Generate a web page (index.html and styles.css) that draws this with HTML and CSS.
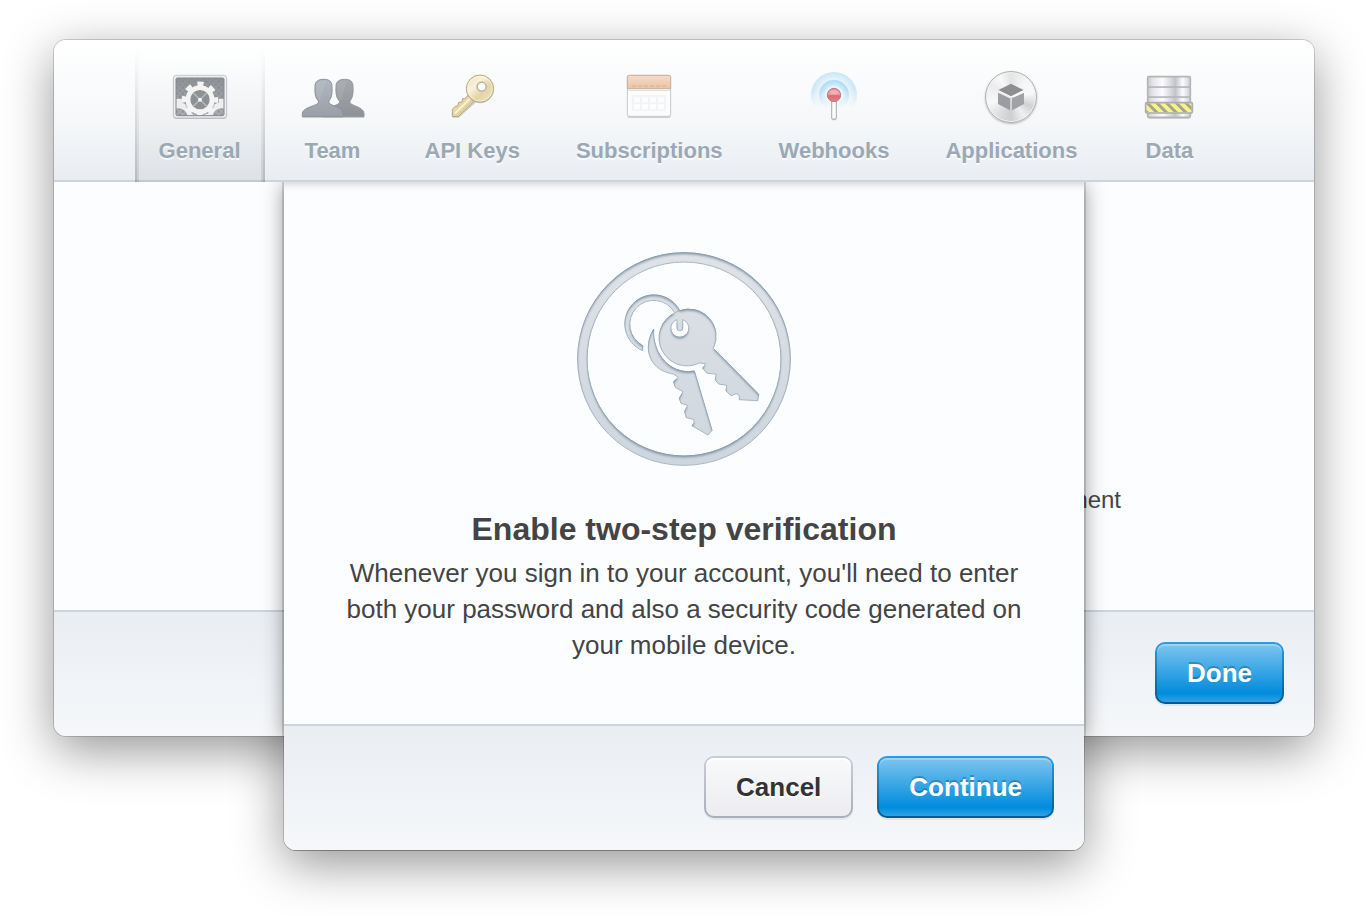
FILE: index.html
```html
<!DOCTYPE html>
<html lang="en">

<head>
    <meta charset="UTF-8">
    <meta name="viewport" content="width=device-width, initial-scale=1.0">
    <title>Account settings</title>
    <link rel="stylesheet" href="styles.css">
</head>

<body>
    <div class="window">
        <nav class="tabs">
            <a href="#general" class="tab active">
                <svg class="tab-icon" viewBox="114 93 192 192" aria-hidden="true">
                    <defs>
                        <clipPath id="panelClip"><rect x="138" y="129" width="144" height="113" rx="4"/></clipPath>
                        <linearGradient id="panelBg" x1="0" y1="0" x2="0" y2="1">
                            <stop offset="0" stop-color="#8f9296"/>
                            <stop offset="1" stop-color="#abadb0"/>
                        </linearGradient>
                        <pattern id="holes" width="18" height="18" patternUnits="userSpaceOnUse">
                            <circle cx="5" cy="5" r="4" fill="#85888c"/>
                            <circle cx="14" cy="14" r="4" fill="#85888c"/>
                        </pattern>
                        <g id="gear">
                            <circle r="46" fill="none" stroke-width="17" stroke-dasharray="18 18.13" stroke-dashoffset="9"/>
                            <circle r="35" fill="none" stroke-width="17"/>
                        </g>
                    </defs>
                    <rect x="130" y="124" width="160" height="128" rx="9" fill="#c3c5c8"/>
                    <rect x="130" y="121" width="160" height="128" rx="9" fill="#eceef4" stroke="#adb0b7" stroke-width="2"/>
                    <rect x="138" y="129" width="144" height="113" rx="4" fill="url(#panelBg)"/>
                    <g clip-path="url(#panelClip)">
                        <rect x="138" y="129" width="144" height="113" fill="url(#holes)" opacity=".6"/>
                        <g stroke="#eeeeef">
                            <use href="#gear" x="146" y="246"/>
                            <use href="#gear" x="274" y="246"/>
                        </g>
                        <circle cx="210" cy="196" r="46" fill="#8e9194" opacity=".5"/>
                        <use href="#gear" x="210" y="194" stroke="#f4f4f5"/>
                        <circle cx="210" cy="194" r="29" fill="#8e9194"/>
                        <path d="M190 174l40 40M230 174l-40 40" stroke="#b9bbbe" stroke-width="4"/>
                        <circle cx="210" cy="194" r="6" fill="#f6f6f7"/>
                    </g>
                    <rect x="138" y="129" width="144" height="113" rx="4" fill="none" stroke="#85888c" stroke-width="3"/>
                </svg>
                <span class="tab-label">General</span>
            </a>
            <a href="#team" class="tab">
                <svg class="tab-icon" viewBox="510 93 192 192" aria-hidden="true">
                    <defs>
                        <linearGradient id="personBack" x1="0" y1="0" x2="0" y2="1">
                            <stop offset="0" stop-color="#a5a8ad"/>
                            <stop offset="1" stop-color="#8e9195"/>
                        </linearGradient>
                        <linearGradient id="personFront" x1="0" y1="0" x2="0" y2="1">
                            <stop offset="0" stop-color="#b0b7c0"/>
                            <stop offset="1" stop-color="#9a9fa7"/>
                        </linearGradient>
                        <path id="person" d="M578 133C595 133 603 140 603 154C604 176 602 188 594 197Q592 203 597 207C611 214 631 219 635 231Q637 238 636 245H514Q513 238 515 231C521 219 545 214 559 207Q564 203 562 197C553 188 551 176 552 154C552 140 561 133 578 133Z"/>
                    </defs>
                    <g fill="#a9abad" opacity=".6">
                        <use href="#person" x="0" y="3"/>
                        <use href="#person" x="63" y="3"/>
                    </g>
                    <use href="#person" x="63" fill="url(#personBack)" stroke="#94979c" stroke-width="3"/>
                    <use href="#person" fill="url(#personFront)" stroke="#8b929c" stroke-width="3"/>
                    <path d="M586 137L566 198Q555 184 555 156Q556 136 586 137ZM649 137L629 198Q618 184 618 156Q619 136 649 137Z" fill="#fff" opacity=".08"/>
                </svg>
                <span class="tab-label">Team</span>
            </a>
            <a href="#keys" class="tab">
                <svg class="tab-icon" viewBox="117 48 192 192" aria-hidden="true">
                    <defs>
                        <linearGradient id="gold" x1="0" y1="0" x2="1" y2="1">
                            <stop offset="0" stop-color="#e8deb8"/>
                            <stop offset=".35" stop-color="#f8f2da"/>
                            <stop offset=".6" stop-color="#e2d5a8"/>
                            <stop offset="1" stop-color="#efe6c3"/>
                        </linearGradient>
                    </defs>
                    <path d="M203 138L190 148L185 147L183 157L173 158L170 169L163 171L154 181V203H173L224 158Z" fill="#b5b3ac" opacity=".6"/>
                    <path d="M203 134L191 146L185 146L183 156L173 157L170 168L163 169L154 178V199L172 200L218 155Z" fill="#e6d8a6" stroke="#b5a684" stroke-width="3" stroke-linejoin="round"/>
                    <path d="M207 146L162 190" stroke="#fbf5d8" stroke-width="5"/>
                    <path d="M213 152L168 197" stroke="#c9b98a" stroke-width="2"/>
                    <circle cx="237" cy="119" r="41" fill="#b5b3ac" opacity=".5"/>
                    <circle cx="237" cy="116" r="41" fill="url(#gold)" stroke="#b5a684" stroke-width="3"/>
                    <circle cx="237" cy="116" r="37" fill="none" stroke="#fdf9e8" stroke-width="2" opacity=".8"/>
                    <circle cx="242" cy="110" r="17" fill="#d9cdaa"/>
                    <circle cx="242" cy="110" r="13" fill="#f8f9fb" stroke="#b3a98f" stroke-width="3"/>
                </svg>
                <span class="tab-label">API Keys</span>
            </a>
            <a href="#subscriptions" class="tab">
                <svg class="tab-icon" viewBox="651 48 192 192" aria-hidden="true">
                    <defs>
                        <linearGradient id="calTop" x1="0" y1="0" x2="0" y2="1">
                            <stop offset="0" stop-color="#f5ddc9"/>
                            <stop offset="1" stop-color="#eac3a3"/>
                        </linearGradient>
                    </defs>
                    <rect x="682" y="80" width="130" height="124" rx="6" fill="#cfcfd1"/>
                    <rect x="682" y="76" width="130" height="123" rx="6" fill="#fcfcfd" stroke="#c9cacc" stroke-width="3"/>
                    <path d="M682 116V82Q682 76 688 76H806Q812 76 812 82V116Z" fill="url(#calTop)" stroke="#cbb09b" stroke-width="3"/>
                    <path d="M696 108H800" stroke="#d6b093" stroke-width="3" stroke-dasharray="12 6"/>
                    <path d="M684 121H810" stroke="#dadadc" stroke-width="3"/>
                    <rect x="696" y="135" width="102" height="48" fill="#f3f4f5"/>
                    <path d="M702 149H794M702 170H794" stroke="#fdfdfe" stroke-width="15" stroke-dasharray="18 6"/>
                </svg>
                <span class="tab-label">Subscriptions</span>
            </a>
            <a href="#webhooks" class="tab">
                <svg class="tab-icon" viewBox="129 48 192 192" aria-hidden="true">
                    <defs>
                        <linearGradient id="waveFade" x1="0" y1="0" x2="0" y2="1">
                            <stop offset=".4" stop-color="#fff"/>
                            <stop offset=".74" stop-color="#000"/>
                        </linearGradient>
                        <mask id="waveMask"><rect x="150" y="60" width="150" height="150" fill="url(#waveFade)"/></mask>
                        <radialGradient id="waveOuter">
                            <stop offset=".65" stop-color="#e8f5fc"/>
                            <stop offset="1" stop-color="#c8e6f6"/>
                        </radialGradient>
                        <radialGradient id="waveInner">
                            <stop offset=".5" stop-color="#dff1fc"/>
                            <stop offset="1" stop-color="#addaf5"/>
                        </radialGradient>
                        <linearGradient id="ball" x1="0" y1="0" x2="0" y2="1">
                            <stop offset="0" stop-color="#e28c90"/>
                            <stop offset=".45" stop-color="#eca0a3"/>
                            <stop offset=".55" stop-color="#d96d73"/>
                            <stop offset="1" stop-color="#e08588"/>
                        </linearGradient>
                    </defs>
                    <g mask="url(#waveMask)">
                        <circle cx="225" cy="135" r="69" fill="url(#waveOuter)"/>
                        <circle cx="225" cy="135" r="45" fill="url(#waveInner)"/>
                        <circle cx="225" cy="135" r="28" fill="#e6f4fd"/>
                    </g>
                    <rect x="218" y="150" width="14" height="61" rx="3" fill="#cbcbcb"/>
                    <rect x="218" y="150" width="14" height="57" rx="2" fill="#f4f4f4" stroke="#b0b0b0" stroke-width="3"/>
                    <path d="M225 156V204" stroke="#fff" stroke-width="5"/>
                    <circle cx="225" cy="135" r="20" fill="url(#ball)" stroke="#c9777b" stroke-width="3"/>
                    <ellipse cx="225" cy="126" rx="12" ry="6" fill="#fff" opacity=".25"/>
                </svg>
                <span class="tab-label">Webhooks</span>
            </a>
            <a href="#applications" class="tab">
                <span class="tab-icon app-disc">
                    <svg class="app-cube" viewBox="717 99 84 84" aria-hidden="true">
                        <path d="M759 104L797 122L759 141L721 122Z" fill="#fff"/>
                        <path d="M759 101L797 120L759 139L721 120Z" fill="#8d8f91"/>
                        <path d="M720 128L756 145V181L720 162Z" fill="#9b9da0"/>
                        <path d="M798 128L762 145V181L798 162Z" fill="#a0a2a5"/>
                    </svg>
                </span>
                <span class="tab-label">Applications</span>
            </a>
            <a href="#data" class="tab">
                <svg class="tab-icon" viewBox="120 108 192 192" aria-hidden="true">
                    <defs>
                        <linearGradient id="steel">
                            <stop offset="0" stop-color="#c9c9d1"/>
                            <stop offset=".12" stop-color="#e4e4ea"/>
                            <stop offset=".35" stop-color="#fcfcff"/>
                            <stop offset=".65" stop-color="#c3c3cc"/>
                            <stop offset=".82" stop-color="#fafaff"/>
                            <stop offset="1" stop-color="#cdcdd4"/>
                        </linearGradient>
                        <clipPath id="tapeClip"><rect x="148" y="220" width="136" height="27"/></clipPath>
                    </defs>
                    <rect x="152" y="248" width="128" height="19" rx="6" fill="#d4d4d6"/>
                    <g fill="url(#steel)" stroke="#b5b5b8" stroke-width="5">
                        <rect x="152" y="200" width="128" height="62" rx="5"/>
                        <rect x="152" y="170" width="128" height="31" rx="3"/>
                        <rect x="152" y="140" width="128" height="31" rx="3"/>
                    </g>
                    <rect x="146" y="218" width="140" height="31" rx="3" fill="#f6f38d"/>
                    <path clip-path="url(#tapeClip)" d="M146 214L186 254M175 214L215 254M204 214L244 254M233 214L273 254M262 214L302 254M117 214L157 254" stroke="#a8a68a" stroke-width="9"/>
                    <rect x="146" y="218" width="140" height="31" rx="3" fill="none" stroke="#acacae" stroke-width="5"/>
                </svg>
                <span class="tab-label">Data</span>
            </a>
        </nav>

        <div class="window-main">
            <div class="window-body">
                <span class="setting-text">ment</span>
            </div>
            <div class="actions">
                <button type="button" class="btn btn-blue">Done</button>
            </div>
        </div>

        <section class="sheet" role="dialog" aria-labelledby="sheetTitle">
            <div class="sheet-body">
                <svg class="keys" viewBox="48 36 642 642" aria-hidden="true">
                    <defs>
                        <linearGradient id="keysFill" gradientUnits="userSpaceOnUse" x1="0" y1="36" x2="0" y2="678">
                            <stop offset="0" stop-color="#dfe2e8"/>
                            <stop offset=".4" stop-color="#d8dde4"/>
                            <stop offset="1" stop-color="#cdd6de"/>
                        </linearGradient>
                        <filter id="keysInset" x="-5%" y="-5%" width="110%" height="110%" color-interpolation-filters="sRGB">
                            <feOffset in="SourceAlpha" dy="5" result="moved"/>
                            <feGaussianBlur in="moved" stdDeviation="3" result="soft"/>
                            <feComposite in="SourceAlpha" in2="soft" operator="out" result="edge"/>
                            <feFlood flood-color="#8296a5" flood-opacity=".9"/>
                            <feComposite in2="edge" operator="in" result="shade"/>
                            <feMerge>
                                <feMergeNode in="SourceGraphic"/>
                                <feMergeNode in="shade"/>
                            </feMerge>
                        </filter>
                    </defs>
                    <g filter="url(#keysInset)" fill="url(#keysFill)" stroke="#aab8c2" stroke-width="3" stroke-linejoin="round">
                        <path fill-rule="evenodd" d="M369 38A319 319 0 1 1 369 676A319 319 0 1 1 369 38ZM369 66A291 291 0 1 0 369 648A291 291 0 1 0 369 66Z"/>
                        <!-- ring -->
                        <path d="M245 332A87 87 0 1 1 356 212L341 218A72 72 0 1 0 245 317Z"/>
                        <!-- front key -->
                        <path fill-rule="evenodd" d="M341 219L356 212A82 82 0 0 1 457 325L593 463L590 482L535 479Q537 463 526 461L510 467L495 453L497 436L473 432L463 420L465 402L438 400L425 385L434 371L415 369A82 82 0 0 1 341 219ZM348 239A27 27 0 1 0 365 239V264A8 8 0 0 1 348 264Z"/>
                        <!-- back key -->
                        <path d="M278 268C274 330 314 394 382 395L400 393L453 571L441 585L393 557Q404 548 398 538L376 533L371 515L380 496L360 490L355 475L366 455L343 442L338 425L352 412L338 402C290 396 262 362 262 322C262 302 268 284 278 268Z"/>
                    </g>
                </svg>
                <h1 class="sheet-title" id="sheetTitle">Enable two-step verification</h1>
                <p class="sheet-text">Whenever you sign in to your account, you'll need to enter both your password and also a security code generated on your mobile device.</p>
            </div>
            <div class="actions">
                <button type="button" class="btn">Cancel</button>
                <button type="button" class="btn btn-blue">Continue</button>
            </div>
        </section>
    </div>
</body>

</html>
```
FILE: styles.css
```css
* {
    box-sizing: border-box;
}

body {
    margin: 0;
    padding: 40px 52px 40px 54px;
    min-height: 100vh;
    overflow: hidden;
    isolation: isolate;
    background-color: #fff;
    color: #444;
    font-family: "Liberation Sans", Arial, Helvetica, sans-serif;
}

.window {
    position: relative;
    border-radius: 12px;
    background-color: #fcfdff;
    box-shadow: 0 0 0 1px rgba(0, 0, 0, 0.16), 0 14px 50px rgba(0, 0, 0, 0.42);
}

/* toolbar */
.tabs {
    display: flex;
    justify-content: center;
    gap: 8px;
    height: 142px;
    padding-right: 4px;
    border-bottom: 2px solid #ccd4dd;
    border-radius: 12px 12px 0 0;
    background: linear-gradient(#fff, #f5f7f9 60%, #e9edf2);
}

.tab {
    display: flex;
    flex-direction: column;
    align-items: center;
    min-width: 120px;
    padding: 26px 24px 0;
    color: #9ba8b5;
    text-decoration: none;
}

.tab.active {
    margin-bottom: -2px;
    background:
        linear-gradient(rgba(0, 0, 0, 0) 5%, rgba(0, 0, 0, 0.09)) left / 4px 100% no-repeat,
        linear-gradient(rgba(0, 0, 0, 0) 5%, rgba(0, 0, 0, 0.09)) left / 2px 100% no-repeat,
        linear-gradient(rgba(0, 0, 0, 0) 5%, rgba(0, 0, 0, 0.09)) right / 4px 100% no-repeat,
        linear-gradient(rgba(0, 0, 0, 0) 5%, rgba(0, 0, 0, 0.09)) right / 2px 100% no-repeat,
        linear-gradient(rgba(0, 0, 0, 0) 10%, rgba(0, 0, 0, 0.05));
}

.tab-icon {
    width: 64px;
    height: 64px;
}

.tab-label {
    margin-top: 7px;
    font-size: 22px;
    font-weight: bold;
    line-height: 28px;
    text-shadow: 0 2px 0 rgba(255, 255, 255, 0.7);
}

.app-disc {
    display: flex;
    align-items: center;
    justify-content: center;
    width: 52px;
    height: 52px;
    margin: 5px 0 7px;
    border: 1px solid #b0b0b0;
    border-radius: 50%;
    background: conic-gradient(#e4e4e4, #f6f6f6 45deg, #f8f8f8 80deg, #cfd1d3 115deg, #f0f0f0 145deg, #ccd0d3 180deg, #dcdee0 215deg, #f8f8f8 255deg, #ececee 300deg, #f8f8f8 330deg, #e4e4e4);
    box-shadow: inset 0 0 0 1px #f2f2f2, 0 1px 2px rgba(0, 0, 0, 0.25);
}

.app-cube {
    width: 28px;
    height: 28px;
}

/* settings behind the sheet */
.window-main {
    position: relative;
    overflow: hidden;
    border-radius: 0 0 12px 12px;
}

.window-main::after {
    content: "";
    position: absolute;
    top: 0;
    bottom: 0;
    left: 50%;
    width: 800px;
    margin-left: -400px;
    box-shadow: 0 0 0 2px rgba(0, 0, 0, 0.14), 0 2px 20px rgba(0, 0, 0, 0.42);
}

.window-body {
    display: flex;
    justify-content: flex-end;
    height: 428px;
    padding: 304px 193px 0 0;
}

.setting-text {
    font-size: 24px;
    line-height: 28px;
}

.actions {
    display: flex;
    justify-content: flex-end;
    gap: 24px;
    padding: 30px 30px 32px;
    border-top: 2px solid #ccd4dd;
    border-radius: 0 0 12px 12px;
    background: linear-gradient(#eaeef3, #eff3f7 50%, #f6f7f9);
}

.btn {
    height: 62px;
    padding: 0 30px;
    border: 2px solid transparent;
    border-radius: 10px;
    background:
        linear-gradient(#f8f9fa, #ededf1) padding-box,
        linear-gradient(#cacdd5, #a9afba) border-box;
    box-shadow: inset 0 2px 0 #fff, 0 2px 0 rgba(0, 0, 0, 0.05);
    color: #333;
    font-family: inherit;
    font-size: 26px;
    font-weight: bold;
    text-shadow: 0 2px 0 #fff;
    cursor: pointer;
}

.btn-blue {
    background:
        linear-gradient(#7dc5ee, #008cdd 85%, #30a2e4) padding-box,
        linear-gradient(#2a9de3, #005a94) border-box;
    box-shadow: inset 0 2px 0 rgba(255, 255, 255, 0.25), 0 2px 0 rgba(0, 0, 0, 0.06);
    color: #fff;
    text-shadow: 0 -2px 0 rgba(0, 40, 80, 0.3);
}

/* the sheet hangs from the toolbar, over the window */
.sheet {
    position: absolute;
    top: 142px;
    left: 50%;
    width: 800px;
    margin-left: -400px;
    border-radius: 0 0 12px 12px;
    background-color: #fcfdff;
    box-shadow: 0 1px 0 rgba(0, 0, 0, 0.2);
}

/* wide shadow falls on the page only, so it sits under the window */
.sheet::before {
    content: "";
    position: absolute;
    z-index: -1;
    top: 100px;
    right: 0;
    bottom: 0;
    left: 0;
    border-radius: 12px;
    box-shadow: 0 0 0 1px rgba(0, 0, 0, 0.16), 0 14px 50px rgba(0, 0, 0, 0.42);
}

.sheet-body {
    padding: 70px 50px 61px;
    box-shadow: inset 0 10px 8px -8px rgba(0, 0, 0, 0.18);
    text-align: center;
}

.keys {
    display: block;
    width: 214px;
    height: 214px;
    margin: 0 auto 42px;
}

.sheet-title {
    margin: 0 0 5px;
    font-size: 32px;
    line-height: 42px;
}

.sheet-text {
    margin: 0;
    font-size: 26px;
    line-height: 36px;
}
```
